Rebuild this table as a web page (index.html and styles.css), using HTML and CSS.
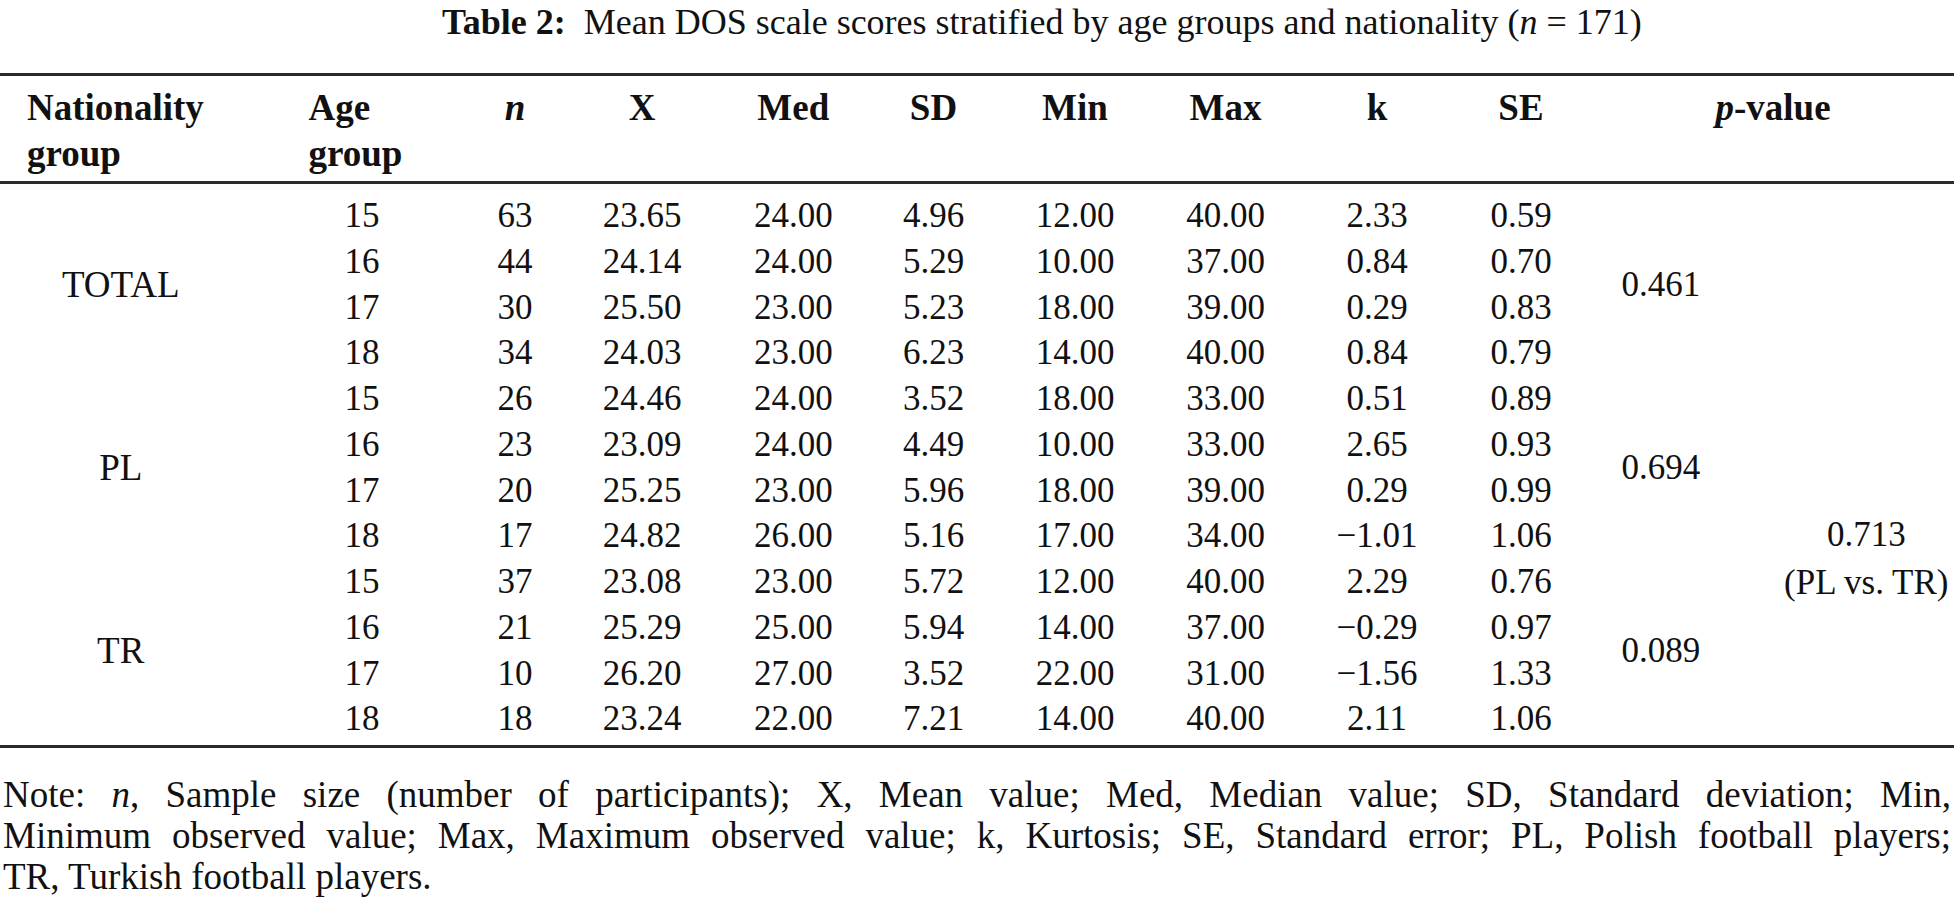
FILE: index.html
```html
<!DOCTYPE html>
<html lang="en">
<head>
<meta charset="utf-8">
<title>Table 2</title>
<link rel="stylesheet" href="styles.css">
</head>
<body>
<div class="page">
  <h1 class="caption"><b>Table 2:</b>&nbsp; Mean DOS scale scores stratified by age groups and nationality (<i>n</i> = 171)</h1>

  <table class="data">
    <colgroup>
      <col class="c-nat">
      <col class="c-age">
      <col class="c-n">
      <col class="c-x">
      <col class="c-med">
      <col class="c-sd">
      <col class="c-min">
      <col class="c-max">
      <col class="c-k">
      <col class="c-se">
      <col class="c-p1">
      <col class="c-p2">
    </colgroup>
    <thead>
      <tr>
        <th class="h-nat">Nationality<br>group</th>
        <th class="h-age">Age<br>group</th>
        <th class="col-n"><i>n</i></th>
        <th class="col-x">X</th>
        <th class="col-med">Med</th>
        <th>SD</th>
        <th class="col-min">Min</th>
        <th>Max</th>
        <th class="col-k">k</th>
        <th>SE</th>
        <th colspan="2"><i>p</i>-value</th>
      </tr>
    </thead>
    <tbody>
      <tr class="spacer-top"><td colspan="12"></td></tr>
      <tr>
        <td rowspan="4" class="grp">TOTAL</td>
        <td class="col-age">15</td><td class="col-n">63</td><td class="col-x">23.65</td><td class="col-med">24.00</td><td>4.96</td><td class="col-min">12.00</td><td>40.00</td><td class="col-k">2.33</td><td>0.59</td>
        <td rowspan="4" class="col-p1">0.461</td>
        <td rowspan="4" class="col-p2"></td>
      </tr>
      <tr><td class="col-age">16</td><td class="col-n">44</td><td class="col-x">24.14</td><td class="col-med">24.00</td><td>5.29</td><td class="col-min">10.00</td><td>37.00</td><td class="col-k">0.84</td><td>0.70</td></tr>
      <tr><td class="col-age">17</td><td class="col-n">30</td><td class="col-x">25.50</td><td class="col-med">23.00</td><td>5.23</td><td class="col-min">18.00</td><td>39.00</td><td class="col-k">0.29</td><td>0.83</td></tr>
      <tr><td class="col-age">18</td><td class="col-n">34</td><td class="col-x">24.03</td><td class="col-med">23.00</td><td>6.23</td><td class="col-min">14.00</td><td>40.00</td><td class="col-k">0.84</td><td>0.79</td></tr>
      <tr>
        <td rowspan="4" class="grp">PL</td>
        <td class="col-age">15</td><td class="col-n">26</td><td class="col-x">24.46</td><td class="col-med">24.00</td><td>3.52</td><td class="col-min">18.00</td><td>33.00</td><td class="col-k">0.51</td><td>0.89</td>
        <td rowspan="4" class="col-p1">0.694</td>
        <td rowspan="8" class="col-p2 overall">0.713<br>(PL vs. TR)</td>
      </tr>
      <tr><td class="col-age">16</td><td class="col-n">23</td><td class="col-x">23.09</td><td class="col-med">24.00</td><td>4.49</td><td class="col-min">10.00</td><td>33.00</td><td class="col-k">2.65</td><td>0.93</td></tr>
      <tr><td class="col-age">17</td><td class="col-n">20</td><td class="col-x">25.25</td><td class="col-med">23.00</td><td>5.96</td><td class="col-min">18.00</td><td>39.00</td><td class="col-k">0.29</td><td>0.99</td></tr>
      <tr><td class="col-age">18</td><td class="col-n">17</td><td class="col-x">24.82</td><td class="col-med">26.00</td><td>5.16</td><td class="col-min">17.00</td><td>34.00</td><td class="col-k">−1.01</td><td>1.06</td></tr>
      <tr>
        <td rowspan="4" class="grp">TR</td>
        <td class="col-age">15</td><td class="col-n">37</td><td class="col-x">23.08</td><td class="col-med">23.00</td><td>5.72</td><td class="col-min">12.00</td><td>40.00</td><td class="col-k">2.29</td><td>0.76</td>
        <td rowspan="4" class="col-p1">0.089</td>
      </tr>
      <tr><td class="col-age">16</td><td class="col-n">21</td><td class="col-x">25.29</td><td class="col-med">25.00</td><td>5.94</td><td class="col-min">14.00</td><td>37.00</td><td class="col-k">−0.29</td><td>0.97</td></tr>
      <tr><td class="col-age">17</td><td class="col-n">10</td><td class="col-x">26.20</td><td class="col-med">27.00</td><td>3.52</td><td class="col-min">22.00</td><td>31.00</td><td class="col-k">−1.56</td><td>1.33</td></tr>
      <tr><td class="col-age">18</td><td class="col-n">18</td><td class="col-x">23.24</td><td class="col-med">22.00</td><td>7.21</td><td class="col-min">14.00</td><td>40.00</td><td class="col-k">2.11</td><td>1.06</td></tr>
      <tr class="spacer-bottom"><td colspan="12"></td></tr>
    </tbody>
  </table>

  <p class="note">
    <span class="line just">Note: <i>n</i>, Sample size (number of participants); X, Mean value; Med, Median value; SD, Standard deviation; Min,</span>
    <span class="line just">Minimum observed value; Max, Maximum observed value; k, Kurtosis; SE, Standard error; PL, Polish football players;</span>
    <span class="line">TR, Turkish football players.</span>
  </p>
</div>
</body>
</html>
```

FILE: styles.css
```css
html, body {
  margin: 0;
  padding: 0;
  background: #ffffff;
}

body {
  font-family: "Liberation Serif", "Times New Roman", serif;
  color: #111111;
}

.page {
  width: 1954px;
}

.caption {
  margin: 0;
  padding-left: 442px;
  font-size: 36px;
  line-height: 44px;
  font-weight: normal;
  white-space: nowrap;
}

.caption b {
  font-weight: bold;
}

.data {
  width: 1954px;
  margin-top: 29px;
  border-collapse: collapse;
  table-layout: fixed;
  border-top: 3px solid #2b2b2b;
  border-bottom: 3px solid #2b2b2b;
}

.c-nat { width: 241.5px; }
.c-age { width: 197px; }
.c-n   { width: 140px; }
.c-x   { width: 139px; }
.c-med { width: 145.5px; }
.c-sd  { width: 141px; }
.c-min { width: 146px; }
.c-max { width: 151px; }
.c-k   { width: 149px; }
.c-se  { width: 142px; }
.c-p1  { width: 171.5px; }
.c-p2  { width: 190.5px; }

.data th {
  font-size: 37px;
  font-weight: bold;
  line-height: 46px;
  text-align: center;
  vertical-align: top;
  padding: 9px 0 4px 0;
  border-bottom: 3px solid #2b2b2b;
  white-space: nowrap;
}

.data th.h-nat {
  text-align: left;
  padding-left: 27px;
}

.data th.h-age {
  text-align: left;
  padding-left: 67px;
}

.data td {
  font-size: 35px;
  line-height: 45.75px;
  text-align: center;
  vertical-align: middle;
  padding: 0;
  white-space: nowrap;
}

.data td.grp {
  font-size: 37px;
}

.data .col-age { padding-left: 44px; }
.data .col-n   { padding-left: 13px; }
.data .col-x   { padding-right: 12px; }
.data .col-med { padding-left: 6px; }
.data .col-min { padding-right: 4px; }
.data .col-k   { padding-left: 3px; }
.data .col-p1  { padding-right: 34px; }
.data .col-p2  { padding-left: 15px; }

.data td.overall {
  line-height: 48px;
}

.spacer-top td {
  height: 9px;
  line-height: 0;
  padding: 0;
}

.spacer-bottom td {
  height: 3px;
  line-height: 0;
  padding: 0;
}

.note {
  margin: 26px 0 0 0;
  padding: 0 3px 0 3px;
  font-size: 37px;
  line-height: 41px;
}

.note .line {
  display: block;
  white-space: nowrap;
}

.note .line.just {
  text-align: justify;
  text-align-last: justify;
  white-space: normal;
}
```
